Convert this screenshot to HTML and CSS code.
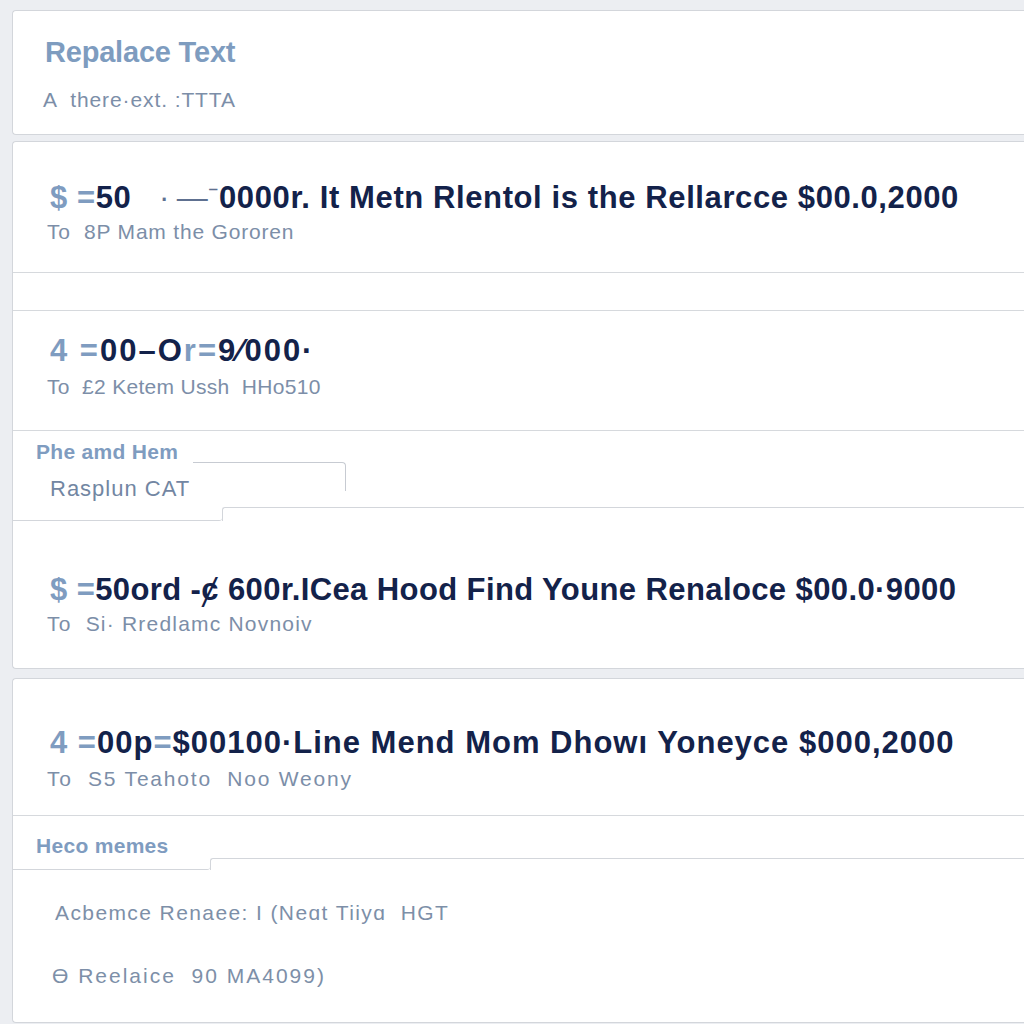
FILE: index.html
```html
<!DOCTYPE html>
<html lang="en">
<head>
<meta charset="utf-8">
<title>Replace Text</title>
<link rel="stylesheet" href="styles.css">
</head>
<body>
<div class="page">
  <section class="card card-intro">
    <h1 class="intro-title">Repalace Text</h1>
    <p class="intro-sub">A &nbsp;there·ext. :TTTA</p>
  </section>

  <section class="card card-main">
    <div class="row row-first">
      <div class="headline"><span class="dim">$ =</span>50&nbsp;&nbsp;&nbsp;<span class="thin">·&thinsp;—⁻</span>0000r. It Metn Rlentol is the Rellarcce $00.0,2000</div>
      <div class="sub">To &nbsp;8P Mam the Gororen</div>
    </div>
    <div class="row-empty"></div>
    <div class="row row-second">
      <div class="headline headline-wide"><span class="dim">4 =</span>00–O<span class="dim">r=</span>9⁄000·</div>
      <div class="sub">To &nbsp;£2 Ketem Ussh &nbsp;HHo510</div>
    </div>
    <div class="field">
      <div class="field-head">
        <div class="field-col">
          <div class="field-label">Phe amd Hem</div>
          <div class="field-value">Rasplun CAT</div>
        </div>
        <div class="field-box"></div>
      </div>
      <div class="step">
        <div class="step-left"></div>
        <div class="step-right"></div>
      </div>
    </div>
    <div class="row row-third">
      <div class="headline headline-tight"><span class="dim">$ =</span>50ord -ȼ 600r.ICea Hood Find Youne Renaloce $00.0·9000</div>
      <div class="sub">To &nbsp;Si· Rredlamc Novnoiv</div>
    </div>
  </section>

  <section class="card card-last">
    <div class="row row-fourth">
      <div class="headline headline-loose"><span class="dim">4 =</span>00p<span class="dim">=</span>$00100·Line Mend Mom Dhowı Yoneyce $000,2000</div>
      <div class="sub sub-loose">To &nbsp;S5 Teahoto &nbsp;Noo Weony</div>
    </div>
    <div class="tabbar">
      <div class="tab"><span class="field-label">Heco memes</span></div>
      <div class="tab-rest"></div>
    </div>
    <div class="notes">
      <p class="note note-a">Acbemce Renaee: I (Neɑt Tiiyɑ &nbsp;HGT</p>
      <p class="note note-b">Ɵ Reelaice &nbsp;90 MA4099)</p>
    </div>
  </section>
</div>
</body>
</html>
```

FILE: styles.css
```css
html, body {
  margin: 0;
  padding: 0;
  background: #eceef2;
  overflow: hidden;
}
body {
  font-family: "Liberation Sans", Arial, sans-serif;
  width: 1024px;
  height: 1024px;
}
.page {
  padding: 10px 0 0 12px;
}
.card {
  background: #ffffff;
  border: 1px solid #d3d6db;
  border-right: none;
  border-radius: 4px 0 0 4px;
  margin-right: -4px;
}
.card-intro {
  padding: 24px 0 21px 32px;
}
.intro-title {
  margin: 0;
  font-size: 29px;
  line-height: 34px;
  font-weight: 700;
  color: #7e9cbf;
  letter-spacing: -0.2px;
}
.intro-sub {
  margin: 18px 0 0 -2px;
  font-size: 21px;
  line-height: 26px;
  color: #7c8ea8;
  letter-spacing: 0.9px;
}
.card-main {
  margin-top: 6px;
}
.row {
  padding-left: 37px;
  border-bottom: 1px solid #d6d9dd;
}
.headline {
  font-size: 31px;
  line-height: 34px;
  font-weight: 700;
  color: #13224a;
  letter-spacing: 0.6px;
  white-space: nowrap;
}
.headline-wide { letter-spacing: 2px; }
.headline-tight { letter-spacing: 0.4px; }
.headline-loose { letter-spacing: 1px; }
.dim {
  color: #7f9cc0;
}
.thin {
  font-weight: 400;
  color: #5e7090;
}
.sub {
  font-size: 21px;
  line-height: 26px;
  color: #7c8ea8;
  margin-left: -3px;
  letter-spacing: 0.8px;
  white-space: nowrap;
}
.sub-loose { letter-spacing: 1.8px; }
.row-first {
  padding-top: 39px;
  padding-bottom: 27px;
}
.row-first .sub { margin-top: 4px; }
.row-empty {
  height: 37px;
  border-bottom: 1px solid #d6d9dd;
}
.row-second {
  padding-top: 23px;
  padding-bottom: 30px;
}
.row-second .sub { margin-top: 6px; letter-spacing: 0.3px; }
.field-head {
  display: flex;
  align-items: flex-start;
  padding-top: 9px;
}
.field-col {
  width: 180px;
  padding-left: 23px;
  box-sizing: border-box;
}
.field-label {
  font-size: 21px;
  line-height: 24px;
  font-weight: 700;
  color: #7f9cc0;
  letter-spacing: 0.3px;
  white-space: nowrap;
}
.field-value {
  margin-top: 13px;
  margin-left: 14px;
  font-size: 22px;
  line-height: 24px;
  color: #7286a2;
  letter-spacing: 1px;
  white-space: nowrap;
}
.field-box {
  width: 152px;
  height: 28px;
  margin-top: 22px;
  border-top: 1.5px solid #c7cbd2;
  border-right: 1.5px solid #c7cbd2;
  border-top-right-radius: 4px;
}
.step {
  display: flex;
  height: 14px;
  margin-top: 6px;
}
.step-left {
  width: 209px;
  border-bottom: 1px solid #d3d6db;
  border-bottom-right-radius: 3px;
}
.step-right {
  flex: 1;
  border-top: 1px solid #d3d6db;
  border-left: 1px solid #d3d6db;
  border-top-left-radius: 3px;
}
.row-third {
  border-bottom: none;
  padding-top: 52px;
  padding-bottom: 31px;
}
.row-third .sub { margin-top: 4px; letter-spacing: 1.2px; }
.card-last {
  margin-top: 9px;
  height: 343px;
}
.row-fourth {
  padding-top: 47px;
  padding-bottom: 23px;
}
.row-fourth .sub { margin-top: 6px; }
.tabbar {
  display: flex;
}
.tab {
  width: 197px;
  box-sizing: border-box;
  padding: 18px 0 11px 23px;
  border-bottom: 1px solid #d3d6db;
  border-bottom-right-radius: 3px;
}
.tab .field-label {
  display: block;
}
.tab-rest {
  flex: 1;
  margin-top: 42px;
  border-top: 1px solid #d3d6db;
  border-left: 1px solid #d3d6db;
  border-top-left-radius: 3px;
}
.notes {
  padding-left: 42px;
}
.note {
  margin: 0;
  font-size: 21px;
  line-height: 24px;
  color: #7d8fa8;
  letter-spacing: 1.4px;
  white-space: nowrap;
}
.note-a {
  margin-top: 31px;
}
.note-b {
  margin-top: 39px;
  margin-left: -3px;
  letter-spacing: 2px;
}
```
